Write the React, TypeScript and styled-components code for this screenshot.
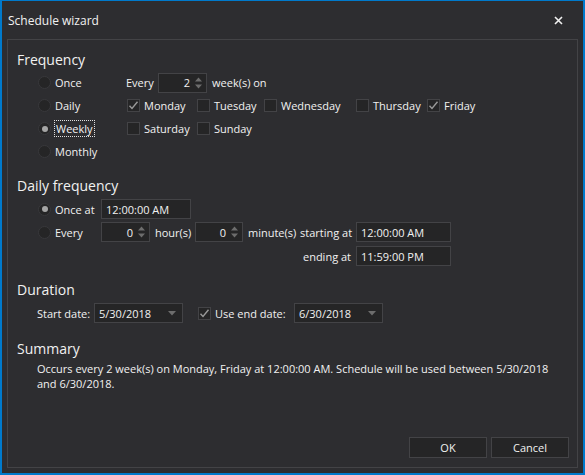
import * as React from "react";
import styled, { createGlobalStyle } from "styled-components";

const colors = {
  accent: "#007acc",
  bg: "#2d2d30",
  border: "#434346",
  field: "#252526",
  text: "#f1f1f1",
  glyph: "#999999",
  arrow: "#6d6d6d"
};

const GlobalStyle = createGlobalStyle`
  html, body {
    margin: 0;
    padding: 0;
    background: ${colors.bg};
  }
  body {
    font-family: "Open Sans", "Noto Sans", sans-serif;
    font-size: 11px;
    color: ${colors.text};
  }
`;

const Window = styled.div`
  box-sizing: border-box;
  width: 585px;
  height: 475px;
  background: ${colors.bg};
  border: 2px solid ${colors.accent};
  border-top-width: 1px;
  display: flex;
  flex-direction: column;
`;

const TitleBar = styled.div`
  height: 38px;
  display: flex;
  align-items: center;
  padding-left: 6px;
  padding-right: 20px;
  font-size: 12px;
`;

const TitleText = styled.div`
  flex: 1;
`;

const Close = styled.svg`
  width: 9px;
  height: 9px;
`;

const Panel = styled.div`
  box-sizing: border-box;
  flex: 1;
  margin: 0 5px 5px 5px;
  border: 1px solid ${colors.border};
  padding: 10px 8px 9px 9px;
  display: flex;
  flex-direction: column;
`;

const Heading = styled.div<{ $top?: number }>`
  font-size: 14px;
  height: 20px;
  line-height: 20px;
  margin-top: ${(p) => p.$top ?? 0}px;
`;

const Indent = styled.div<{ $left: number }>`
  padding-left: ${(p) => p.$left}px;
`;

const FreqBody = styled.div`
  display: flex;
  padding-left: 21px;
  margin-top: 1px;
`;

const RadioColumn = styled.div`
  width: 88px;
  display: flex;
  flex-direction: column;
`;

const Line = styled.div<{ $h?: number }>`
  height: ${(p) => p.$h ?? 23}px;
  display: flex;
  align-items: center;
`;

const RadioCircle = styled.span<{ $on?: boolean }>`
  box-sizing: border-box;
  width: 13px;
  height: 13px;
  border-radius: 50%;
  background: ${colors.field};
  border: 1px solid #38383b;
  display: flex;
  align-items: center;
  justify-content: center;
  margin-right: 4px;
  flex: none;

  &::after {
    content: "";
    width: 6px;
    height: 6px;
    border-radius: 50%;
    background: ${(p) => (p.$on ? "#a5a5a5" : "transparent")};
  }
`;

const Focus = styled.span`
  outline: 1px dotted #e0e0e0;
  outline-offset: 0;
  padding: 0 1px;
  line-height: 15px;
`;

const Label = styled.span<{ $w?: number; $right?: boolean }>`
  box-sizing: border-box;
  width: ${(p) => (p.$w ? `${p.$w}px` : "auto")};
  flex: none;
  white-space: nowrap;
  text-align: ${(p) => (p.$right ? "right" : "left")};
  padding-right: ${(p) => (p.$right ? 5 : 0)}px;
`;

const Box = styled.div<{ $w: number }>`
  box-sizing: border-box;
  width: ${(p) => p.$w}px;
  height: 20px;
  background: ${colors.field};
  border: 1px solid ${colors.border};
  display: flex;
  align-items: center;
  flex: none;
`;

const BoxText = styled.span<{ $right?: boolean }>`
  flex: 1;
  padding: 0 4px 0 4px;
  text-align: ${(p) => (p.$right ? "right" : "left")};
  white-space: nowrap;
`;

const SpinArrows = styled.svg`
  width: 9px;
  height: 16px;
  margin-right: 3px;
`;

const Drop = styled.svg`
  width: 8px;
  height: 5px;
  margin-right: 6px;
`;

const DayGrid = styled.div`
  display: grid;
  grid-template-columns: 70px 67px 92px 71px auto;
  grid-auto-rows: 23px;
  margin-left: 1px;
`;

const CheckItem = styled.label`
  display: flex;
  align-items: center;
  white-space: nowrap;
`;

const CheckBox = styled.span`
  box-sizing: border-box;
  width: 13px;
  height: 13px;
  background: ${colors.field};
  border: 1px solid ${colors.border};
  margin-right: 4px;
  display: flex;
  align-items: center;
  justify-content: center;
  flex: none;
`;

const Row = styled.div<{ $top?: number; $left?: number }>`
  display: flex;
  align-items: center;
  height: 20px;
  margin-top: ${(p) => p.$top ?? 0}px;
  padding-left: ${(p) => p.$left ?? 0}px;
`;

const Gap = styled.span<{ $w: number }>`
  width: ${(p) => p.$w}px;
  flex: none;
`;

const SummaryText = styled.div`
  padding-left: 20px;
  margin-top: 2px;
  line-height: 15px;
  width: 522px;
`;

const Footer = styled.div`
  margin-top: auto;
  display: flex;
  justify-content: flex-end;
  gap: 4px;
`;

const Button = styled.button`
  box-sizing: border-box;
  width: 78px;
  height: 21px;
  background: ${colors.field};
  border: 1px solid ${colors.border};
  color: ${colors.text};
  font-family: inherit;
  font-size: 11px;
  padding: 0;
`;

const Radio = ({ on, children }: { on?: boolean; children: React.ReactNode }) => (
  <>
    <RadioCircle $on={on} />
    {children}
  </>
);

const Check = ({ on }: { on?: boolean }) => (
  <CheckBox>
    {on && (
      <svg width="11" height="11" viewBox="0 0 11 11">
        <path d="M1.5 5.8 L4 8.5 L9.5 1.8" fill="none" stroke={colors.glyph} strokeWidth="1.4" />
      </svg>
    )}
  </CheckBox>
);

const Spinner = ({ value, w }: { value: string; w: number }) => (
  <Box $w={w}>
    <BoxText $right>{value}</BoxText>
    <SpinArrows viewBox="0 0 9 16">
      <path d="M1 6.5 L4.5 2.5 L8 6.5 Z" fill={colors.arrow} />
      <path d="M1 9.5 L4.5 13.5 L8 9.5 Z" fill={colors.arrow} />
    </SpinArrows>
  </Box>
);

const DateBox = ({ value, w }: { value: string; w: number }) => (
  <Box $w={w}>
    <BoxText>{value}</BoxText>
    <Drop viewBox="0 0 8 5">
      <path d="M0 0 L8 0 L4 4.5 Z" fill={colors.arrow} />
    </Drop>
  </Box>
);

const days: { name: string; on?: boolean }[] = [
  { name: "Monday", on: true },
  { name: "Tuesday" },
  { name: "Wednesday" },
  { name: "Thursday" },
  { name: "Friday", on: true },
  { name: "Saturday" },
  { name: "Sunday" }
];

export default function App() {
  return (
    <>
      <GlobalStyle />
      <Window>
        <TitleBar>
          <TitleText>Schedule wizard</TitleText>
          <Close viewBox="0 0 9 9">
            <path d="M1 1 L8 8 M8 1 L1 8" stroke="#f1f1f1" strokeWidth="1.6" />
          </Close>
        </TitleBar>
        <Panel>
          <Heading>Frequency</Heading>
          <FreqBody>
            <RadioColumn>
              <Line><Radio>Once</Radio></Line>
              <Line><Radio>Daily</Radio></Line>
              <Line><Radio on><Focus>Weekly</Focus></Radio></Line>
              <Line><Radio>Monthly</Radio></Line>
            </RadioColumn>
            <div>
              <Line>
                <Label $w={32}>Every</Label>
                <Spinner value="2" w={49} />
                <Gap $w={5} />
                <Label>week(s) on</Label>
              </Line>
              <DayGrid>
                {days.map((d) => (
                  <CheckItem key={d.name}>
                    <Check on={d.on} />
                    {d.name}
                  </CheckItem>
                ))}
              </DayGrid>
            </div>
          </FreqBody>

          <Heading $top={13}>Daily frequency</Heading>
          <Indent $left={21}>
            <Row $top={3}>
              <Radio on><Label $w={46}>Once at</Label></Radio>
              <Box $w={90}><BoxText>12:00:00 AM</BoxText></Box>
            </Row>
            <Row $top={3}>
              <Radio><Label $w={46}>Every</Label></Radio>
              <Spinner value="0" w={49} />
              <Gap $w={5} />
              <Label $w={40}>hour(s)</Label>
              <Spinner value="0" w={48} />
              <Gap $w={5} />
              <Label $w={52}>minute(s)</Label>
              <Label $w={56} $right>starting at</Label>
              <Box $w={95}><BoxText>12:00:00 AM</BoxText></Box>
            </Row>
            <Row $top={4} $left={262}>
              <Label $w={56} $right>ending at</Label>
              <Box $w={95}><BoxText>11:59:00 PM</BoxText></Box>
            </Row>
          </Indent>

          <Heading $top={14}>Duration</Heading>
          <Row $top={3} $left={20}>
            <Label $w={57}>Start date:</Label>
            <DateBox value="5/30/2018" w={89} />
            <Gap $w={15} />
            <Check on />
            <Label $w={79}>Use end date:</Label>
            <DateBox value="6/30/2018" w={89} />
          </Row>

          <Heading $top={16}>Summary</Heading>
          <SummaryText>
            Occurs every 2 week(s) on Monday, Friday at 12:00:00 AM. Schedule will be used between 5/30/2018 and
            6/30/2018.
          </SummaryText>

          <Footer>
            <Button>OK</Button>
            <Button>Cancel</Button>
          </Footer>
        </Panel>
      </Window>
    </>
  );
}
